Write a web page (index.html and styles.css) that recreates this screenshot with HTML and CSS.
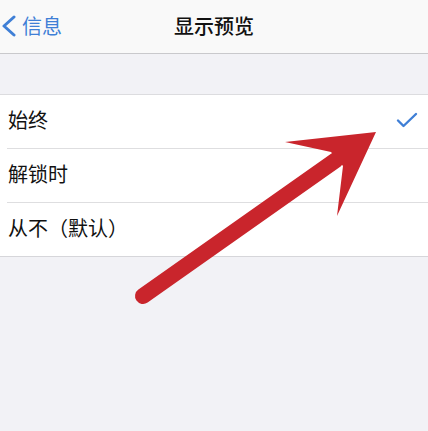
FILE: index.html
```html
<!DOCTYPE html>
<html lang="zh-CN">
<head>
<meta charset="utf-8">
<link rel="stylesheet" href="styles.css">
</head>
<body>
<div class="page">
  <header class="nav">
    <div class="back">
      <svg class="chev" width="16" height="22" viewBox="0 0 16 22"><path d="M13 2 L3 11 L13 20" fill="none" stroke="#3f7fd6" stroke-width="3" stroke-linecap="round" stroke-linejoin="round"/></svg>
      <span class="back-text">信息</span>
    </div>
    <div class="title">显示预览</div>
  </header>
  <div class="gap"></div>
  <ul class="list">
    <li class="row"><span class="label">始终</span>
      <svg class="check" width="22" height="16" viewBox="0 0 22 16"><path d="M2 8.5 L7.5 14 L20 2" fill="none" stroke="#3f7fd6" stroke-width="2.4" stroke-linecap="round" stroke-linejoin="round"/></svg>
    </li>
    <li class="row"><span class="label">解锁时</span></li>
    <li class="row last"><span class="label">从不（默认）</span></li>
  </ul>
  <svg class="arrow" width="428" height="431" viewBox="0 0 428 431">
    <line x1="143" y1="296" x2="336" y2="160" stroke="#c9252c" stroke-width="16" stroke-linecap="round"/>
    <polygon points="376,132 285,142 331,152 343,166 337,216" fill="#c9252c"/>
  </svg>
</div>
</body>
</html>
```
FILE: styles.css
```css
* { box-sizing: border-box; }
html, body { margin: 0; padding: 0; }
body {
  font-family: "Noto Sans CJK SC", "Noto Sans", sans-serif;
  background: #f2f2f6;
  width: 428px;
  height: 431px;
  overflow: hidden;
}
.page { position: relative; width: 428px; height: 431px; }
.nav {
  height: 54px;
  background: #f9f9f9;
  border-bottom: 1px solid #c9c9cc;
  display: flex;
  align-items: center;
  justify-content: center;
  position: relative;
}
.back {
  position: absolute;
  left: 0;
  top: 0;
  height: 53px;
  display: flex;
  align-items: center;
  gap: 5px;
  padding-left: 1px;
  color: #3f7fd6;
}
.back-text { font-size: 20px; line-height: 1; margin-top: -2px; }
.chev { display: block; margin-top: -2px; }
.title {
  font-size: 20px;
  font-weight: 500;
  color: #111;
  margin-top: -3px;
}
.gap { height: 40px; }
.list {
  list-style: none;
  margin: 0;
  padding: 0 0 0 7px;
  background: #fff;
  border-top: 1px solid #dcdcdf;
  border-bottom: 1px solid #d6d6da;
}
.row {
  height: 54px;
  display: flex;
  align-items: center;
  justify-content: space-between;
  padding-right: 10px;
  border-bottom: 1px solid #dedee0;
}
.row.last { border-bottom: none; height: 53px; }
.label {
  font-size: 20px;
  color: #111;
  padding-left: 1px;
  margin-top: -4px;
}
.check { margin-top: -4px; }
.arrow { position: absolute; left: 0; top: 0; pointer-events: none; }
```
